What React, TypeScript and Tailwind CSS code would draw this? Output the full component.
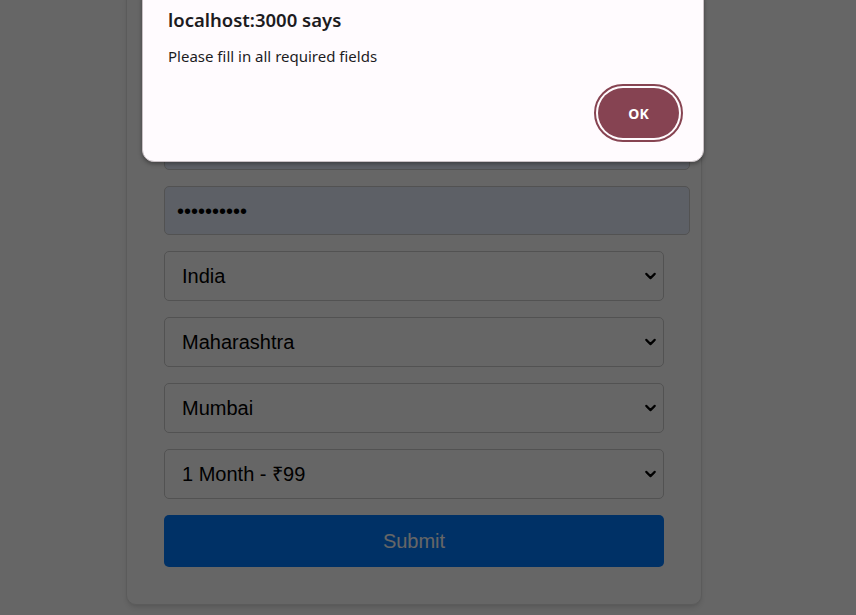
import { ChevronDown } from 'lucide-react';

const selects = ['India', 'Maharashtra', 'Mumbai', '1 Month - ₹99'];

const Field = ({ value }: { value: string }) => (
  <div className="relative w-[500px] h-[50px]">
    <select
      defaultValue={value}
      className="appearance-none w-full h-full box-border border border-[#cccccc] rounded-[5px] bg-white pl-[17px] pr-8 text-[20px] text-black outline-none"
      style={{ fontFamily: '"Liberation Sans", Arial, sans-serif' }}
    >
      <option>{value}</option>
    </select>
    <ChevronDown
      className="pointer-events-none absolute right-[5px] top-1/2 -translate-y-1/2 h-[17px] w-[17px] text-black"
      strokeWidth={3}
    />
  </div>
);

const App = () => {
  return (
    <div className="relative h-[615px] w-[856px] overflow-hidden bg-white" style={{ fontFamily: '"Liberation Sans", Arial, sans-serif' }}>
      <div className="flex mt-[-13px] ml-[126px]">
        <form className="w-[576px] bg-white border border-[#e4e4e4] rounded-[10px] shadow-md p-[37px] flex flex-col gap-4">
          <h2 className="text-[28px] font-bold text-center text-[#333] h-[80px] leading-[80px]">Register</h2>
          <input
            type="email"
            defaultValue="user@example.com"
            className="box-content w-full h-[23px] px-3 py-3 border border-[#cccccc] rounded-[5px] bg-[#e8f0fe] text-[20px] text-black outline-none"
          />
          <input
            type="password"
            defaultValue="abcdefghij"
            className="box-content w-full h-[23px] px-3 py-3 border border-[#cccccc] rounded-[5px] bg-[#e8f0fe] text-[20px] text-black outline-none"
          />
          {selects.map((s) => (
            <Field key={s} value={s} />
          ))}
          <button
            type="button"
            className="w-[500px] h-[52px] rounded-[5px] bg-[#007bff] text-white text-[20px]"
          >
            Submit
          </button>
        </form>
      </div>

      {/* alert backdrop */}
      <div className="absolute inset-0 bg-black/60" />

      {/* alert dialog */}
      <div
        className="absolute left-[142px] top-[-12px] w-[562px] h-[174px] bg-[#fffbfe] border border-[#c9c1c5] rounded-[12px] shadow-[0_2px_4px_rgba(0,0,0,0.35)] pl-[25px] pr-[20px] pt-[19px] pb-[19px] flex flex-col"
        style={{ fontFamily: '"Noto Sans", "Open Sans", sans-serif' }}
      >
        <div className="text-[18.5px] font-semibold text-[#1d1b1e] leading-6">localhost:3000 says</div>
        <div className="mt-[14px] text-[15px] text-[#1d1b1e] leading-5">Please fill in all required fields</div>
        <div className="mt-auto flex justify-end">
          <button
            type="button"
            className="rounded-full border-2 border-[#874452] p-[2px]"
          >
            <span className="flex items-center justify-center w-[81px] h-[50px] rounded-full bg-[#864352] text-white text-[14px] font-bold">
              OK
            </span>
          </button>
        </div>
      </div>
    </div>
  );
};

export default App;
